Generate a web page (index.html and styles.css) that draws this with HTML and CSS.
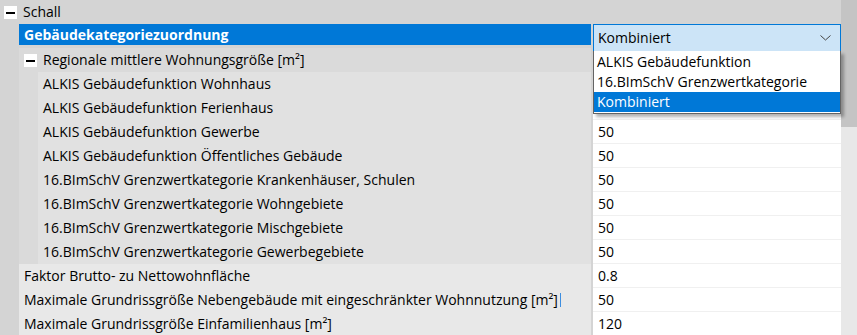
FILE: index.html
```html
<!DOCTYPE html>
<html lang="de">
  <head>
    <meta charset="UTF-8" />
    <meta name="viewport" content="width=device-width, initial-scale=1.0" />
    <title>Schall</title>
    <link rel="stylesheet" href="styles.css">
  </head>
  <body>
    <div class="grid">
      <div class="rows">
        <div class="row category">
          <span class="toggle"></span>
          <span class="cat-label">Schall</span>
        </div>

        <div class="row lvl1">
          <div class="name selected">Gebäudekategoriezuordnung</div>
          <div class="value combo">
            <span>Kombiniert</span>
            <svg class="chevron" width="11" height="6" viewBox="0 0 11 6">
              <polyline points="0.5,0.5 5.5,5 10.5,0.5" fill="none" stroke="#444" stroke-width="1" />
            </svg>
          </div>
        </div>

        <div class="row lvl1">
          <div class="name group">
            <span class="toggle"></span>
            <span>Regionale mittlere Wohnungsgröße [m²]</span>
          </div>
          <div class="value"></div>
        </div>

        <div class="row lvl2">
          <div class="name">ALKIS Gebäudefunktion Wohnhaus</div>
          <div class="value"></div>
        </div>
        <div class="row lvl2">
          <div class="name">ALKIS Gebäudefunktion Ferienhaus</div>
          <div class="value"></div>
        </div>
        <div class="row lvl2">
          <div class="name">ALKIS Gebäudefunktion Gewerbe</div>
          <div class="value">50</div>
        </div>
        <div class="row lvl2">
          <div class="name">ALKIS Gebäudefunktion Öffentliches Gebäude</div>
          <div class="value">50</div>
        </div>
        <div class="row lvl2">
          <div class="name">16.BImSchV Grenzwertkategorie Krankenhäuser, Schulen</div>
          <div class="value">50</div>
        </div>
        <div class="row lvl2">
          <div class="name">16.BImSchV Grenzwertkategorie Wohngebiete</div>
          <div class="value">50</div>
        </div>
        <div class="row lvl2">
          <div class="name">16.BImSchV Grenzwertkategorie Mischgebiete</div>
          <div class="value">50</div>
        </div>
        <div class="row lvl2">
          <div class="name">16.BImSchV Grenzwertkategorie Gewerbegebiete</div>
          <div class="value">50</div>
        </div>

        <div class="row lvl1">
          <div class="name plain">Faktor Brutto- zu Nettowohnfläche</div>
          <div class="value">0.8</div>
        </div>
        <div class="row lvl1">
          <div class="name plain">Maximale Grundrissgröße Nebengebäude mit eingeschränkter Wohnnutzung [m²]<span class="caret"></span></div>
          <div class="value">50</div>
        </div>
        <div class="row lvl1">
          <div class="name plain">Maximale Grundrissgröße Einfamilienhaus [m²]</div>
          <div class="value">120</div>
        </div>
      </div>

      <div class="scrollbar">
        <div class="thumb"></div>
      </div>

      <!-- aufgeklappte Auswahlliste -->
      <ul class="dropdown">
        <li>ALKIS Gebäudefunktion</li>
        <li>16.BImSchV Grenzwertkategorie</li>
        <li class="active">Kombiniert</li>
      </ul>
    </div>
  </body>
</html>
```

FILE: styles.css
```css
/* Grundlayout */
body {
  margin: 0;
  padding: 0;
  font-family: 'Open Sans', 'Noto Sans', sans-serif;
  font-size: 14px;
  color: #000;
  background-color: #d4d4d4;
}

.grid {
  position: relative;
  display: flex;
  width: 857px;
  height: 335px;
  overflow: hidden;
  background-color: #d4d4d4;
}

.rows {
  width: 841px;
}

/* Zeilen */
.row {
  display: flex;
  height: 24px;
  line-height: 24px;
  white-space: nowrap;
}

.row.category {
  align-items: center;
  padding-left: 4px;
}

.cat-label {
  margin-left: 6px;
}

/* Plus/Minus Knoten */
.toggle {
  position: relative;
  display: inline-block;
  width: 13px;
  height: 13px;
  background-color: #fff;
  flex-shrink: 0;
}

.toggle::after {
  content: "";
  position: absolute;
  left: 2px;
  top: 6px;
  width: 9px;
  height: 2px;
  background-color: #000;
}

.lvl1 {
  padding-left: 19px;
}

.lvl2 {
  padding-left: 19px;
}

.lvl2 .name {
  border-left: 19px solid #dadada;
  background-color: #e1e1e1;
}

.name {
  flex: 1;
  padding-left: 5px;
  overflow: hidden;
  position: relative;
}

.name.plain {
  background-color: #e8e8e8;
}

.name.group {
  display: flex;
  align-items: center;
  background-color: #dadada;
  padding-left: 5px;
}

.name.group .toggle {
  margin-right: 6px;
}

.name.selected {
  background-color: #0078d7;
  color: #fff;
  font-weight: bold;
  height: 21px;
  line-height: 21px;
}

.value {
  width: 243px;
  margin-left: 2px;
  padding-left: 5px;
  background-color: #fff;
  border-bottom: 1px solid #f0f0f0;
  box-sizing: border-box;
  width: 248px;
}

/* Kombinationsfeld */
.value.combo {
  position: relative;
  z-index: 2;
  display: flex;
  justify-content: space-between;
  align-items: center;
  height: 28px;
  background-color: #cce4f7;
  border: 1px solid #0078d7;
  padding: 0 5px 0 4px;
}

.chevron {
  margin-right: 4px;
}

.caret {
  position: absolute;
  left: 541px;
  top: 5px;
  width: 1px;
  height: 14px;
  background-color: #3d8ee0;
}

/* Bildlaufleiste */
.scrollbar {
  width: 16px;
  background-color: #e8e8e8;
}

.thumb {
  height: 127px;
  background-color: #c4c4c4;
}

/* Auswahlliste */
.dropdown {
  position: absolute;
  left: 593px;
  top: 51px;
  z-index: 3;
  width: 248px;
  margin: 0;
  padding: 1px 0;
  list-style: none;
  box-sizing: border-box;
  background-color: #fff;
  border: 1px solid #646464;
  border-top: none;
  box-shadow: 3px 3px 3px rgba(0, 0, 0, 0.3);
}

.dropdown li {
  height: 20px;
  line-height: 20px;
  padding-left: 3px;
}

.dropdown li.active {
  background-color: #0078d7;
  color: #fff;
}
```
